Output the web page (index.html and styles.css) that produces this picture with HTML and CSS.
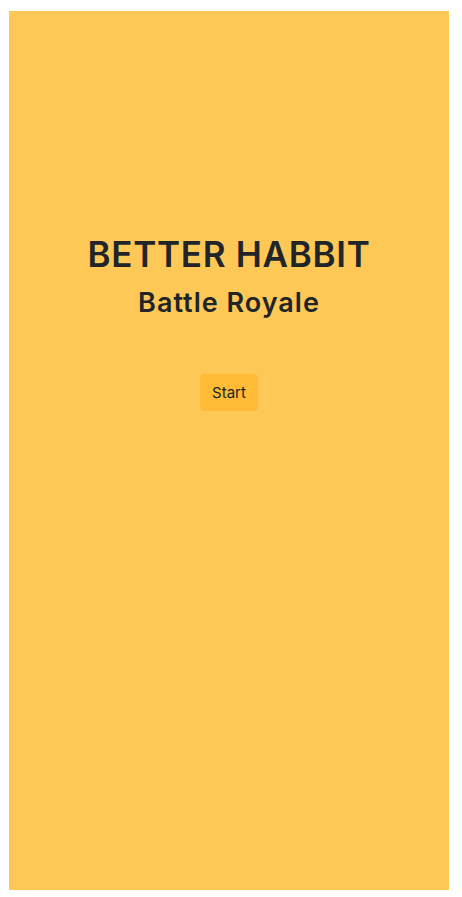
FILE: index.html
```html
<!DOCTYPE html>
<html>
<head>
<meta charset="utf-8">
<link rel="stylesheet" href="styles.css">
</head>
<body>
<main class="screen">
  <h1 class="title">BETTER HABBIT</h1>
  <h2 class="subtitle">Battle Royale</h2>
  <button class="start-btn">Start</button>
</main>
</body>
</html>
```
FILE: styles.css
```css
html, body {
  margin: 0;
  padding: 0;
  background: #ffffff;
}
body {
  padding: 11px 13px 7px 9px;
  font-family: Inter, "Noto Sans", sans-serif;
  color: #212529;
}
.screen {
  height: 879px;
  background: #fec857;
  display: flex;
  flex-direction: column;
  align-items: center;
  padding-top: 222px;
  box-sizing: border-box;
}
.title {
  margin: 0;
  font-size: 35px;
  font-weight: 600;
  line-height: 42px;
  letter-spacing: 0.7px;
  white-space: nowrap;
}
.subtitle {
  margin: 12px 0 0 0;
  font-size: 27px;
  font-weight: 600;
  line-height: 32px;
  letter-spacing: 1px;
  white-space: nowrap;
}
.start-btn {
  margin-top: 55px;
  font-family: Inter, "Noto Sans", sans-serif;
  font-size: 15px;
  line-height: 23px;
  padding: 6px 11px;
  color: #212529;
  background: #ffbb35;
  border: 1px solid #ffbb35;
  border-radius: 4px;
}
```
